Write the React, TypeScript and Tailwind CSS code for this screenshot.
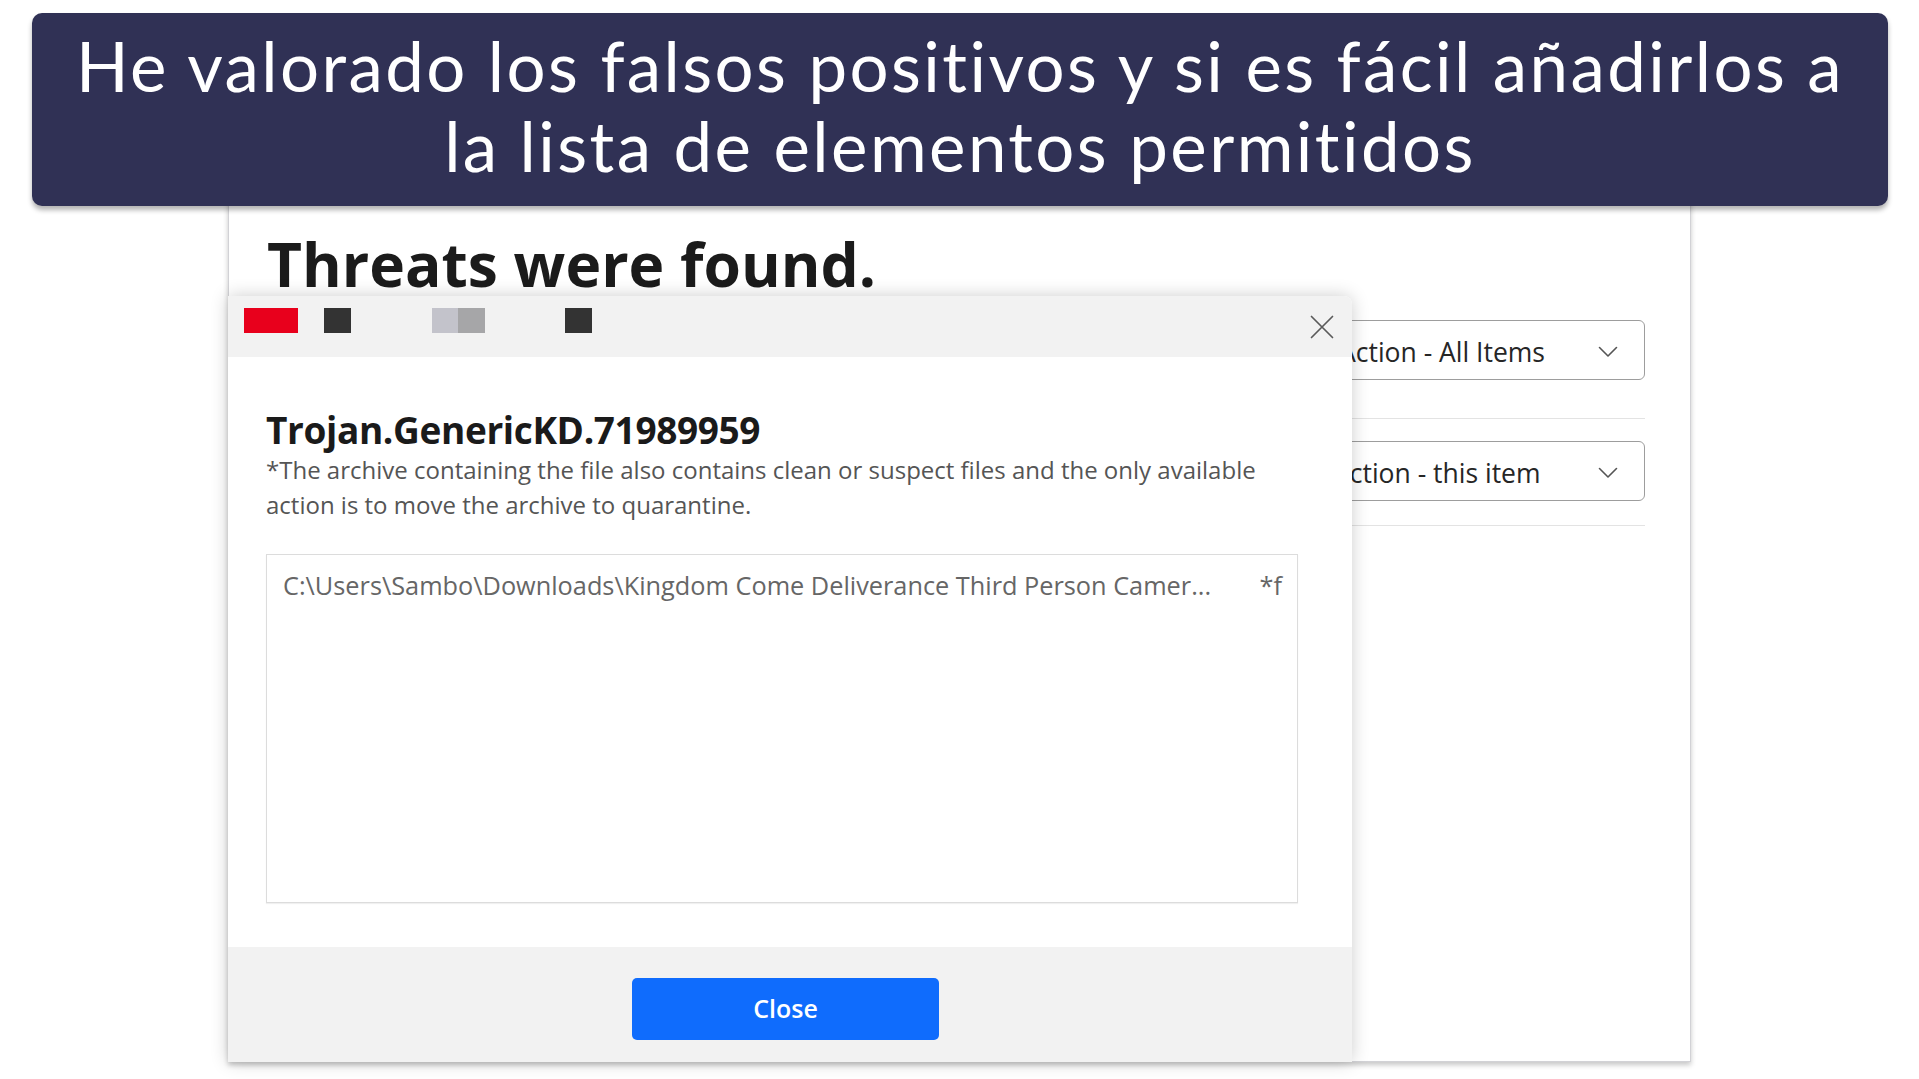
import type { FC } from 'react';

const Chevron: FC = () => (
  <svg width="20" height="12" viewBox="0 0 20 12" fill="none" className="shrink-0">
    <path d="M1.5 1.5L10 10L18.5 1.5" stroke="#555" strokeWidth="1.6" strokeLinecap="round" strokeLinejoin="round" />
  </svg>
);

const CloseIcon: FC = () => (
  <svg width="24" height="24" viewBox="0 0 24 24" fill="none">
    <path d="M1.5 1.5L22.5 22.5M22.5 1.5L1.5 22.5" stroke="#5a5a5a" strokeWidth="1.7" strokeLinecap="round" />
  </svg>
);

interface ActionSelectProps {
  label: string;
  indent: string;
}

const ActionSelect: FC<ActionSelectProps> = ({ label, indent }) => (
  <div className={`flex h-[60px] items-center justify-between rounded-[6px] border border-[#9d9d9d] pr-[26px] pt-[4px] ${indent}`}>
    <span className="text-[26.5px] leading-[36px] text-[#262626]">{label}</span>
    <Chevron />
  </div>
);

const ThreatDialog: FC = () => (
  <div className="absolute left-[228px] top-[296px] flex h-[766px] w-[1124px] flex-col rounded-tr-[8px] bg-white shadow-[0_0_18px_rgba(0,0,0,0.2)]">
    {/* title bar with the product's colour blocks */}
    <div className="flex h-[61px] items-start rounded-tr-[8px] bg-[#f2f2f2] pl-[16px] pr-[18px] pt-[12px]">
      <div className="h-[25px] w-[54px] bg-[#e8001c]" />
      <div className="ml-[26px] h-[25px] w-[27px] bg-[#333333]" />
      <div className="ml-[81px] h-[25px] w-[26px] bg-[#c3c3cb]" />
      <div className="h-[25px] w-[27px] bg-[#a6a6a8]" />
      <div className="ml-[80px] h-[25px] w-[27px] bg-[#333333]" />
      <button type="button" className="ml-auto mt-[7px]">
        <CloseIcon />
      </button>
    </div>

    <div className="flex flex-1 flex-col pl-[38px] pr-[54px] pt-[51px]">
      <h2 className="text-[37px] font-bold leading-[44px] tracking-[-0.01em] text-[#1a1a1a]">
        Trojan.GenericKD.71989959
      </h2>
      <p className="text-[24px] leading-[35px] text-[#555555]">
        *The archive containing the file also contains clean or suspect files and the only available
        <br />
        action is to move the archive to quarantine.
      </p>
      <div className="mt-[32px] flex h-[349px] items-start justify-between border border-[#dcdcdc] pl-[16px] pr-[15px] pt-[14px] text-[25.3px] leading-[32px] text-[#666666] shadow-[0_1px_1px_rgba(0,0,0,0.06)]">
        <span>C:\Users\Sambo\Downloads\Kingdom Come Deliverance Third Person Camer...</span>
        <span>*f</span>
      </div>
    </div>

    <div className="h-[115px] bg-[#f2f2f2] pl-[404px] pt-[31px]">
      <button
        type="button"
        className="h-[62px] w-[307px] rounded-[5px] bg-[#0f6cfd] text-[25px] font-semibold text-white"
      >
        Close
      </button>
    </div>
  </div>
);

export default function App() {
  return (
    <div className="relative h-[1079px] w-[1919px] overflow-hidden bg-white font-['Open_Sans',sans-serif]">
      {/* scan results window */}
      <div className="ml-[228px] mt-[150px] flex h-[912px] w-[1463px] flex-col border-x border-b border-[#d2d2d6] bg-white shadow-[0_3px_5px_rgba(0,0,0,0.22)]">
        <h1 className="ml-[38px] mt-[74px] text-[60.5px] font-bold leading-[80px] text-[#1b1b1b]">
          Threats were found.
        </h1>
        <div className="mr-[45px] mt-[16px] w-[560px] self-end">
          <ActionSelect label="Action - All Items" indent="pl-[253px]" />
          <div className="mt-[38px] border-t border-[#e3e3e3]" />
          <div className="mt-[22px]">
            <ActionSelect label="Action - this item" indent="pl-[247px]" />
          </div>
          <div className="mt-[24px] border-t border-[#e3e3e3]" />
        </div>
      </div>

      <ThreatDialog />

      {/* caption banner */}
      <div className="absolute left-[32px] top-[13px] h-[193px] w-[1856px] rounded-[10px] bg-[#303155] pt-[13px] text-center font-['Lato',sans-serif] text-[69px] leading-[80px] tracking-[0.035em] text-white shadow-[0_4px_5px_rgba(0,0,0,0.3)]">
        <span className="block">He valorado los falsos positivos y si es fácil añadirlos a</span>
        <span className="block">la lista de elementos permitidos</span>
      </div>
    </div>
  );
}
